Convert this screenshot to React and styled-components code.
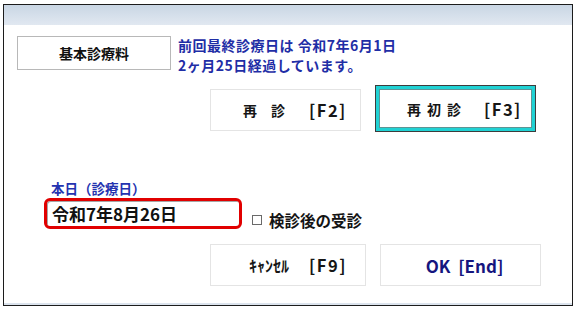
import React from "react";
import styled, { createGlobalStyle } from "styled-components";

const GlobalStyle = createGlobalStyle`
  body {
    margin: 0;
    background: #ffffff;
    font-family: "Noto Sans CJK JP", "Noto Sans", sans-serif;
  }
`;

const App = () => {
  return (
    <>
      <GlobalStyle />
      <Window>
        <TitleBar />
        <Content>
          <TopRow>
            <FeeBox>基本診療料</FeeBox>
            <Info>
              前回最終診療日は 令和7年6月1日
              <br />
              2ヶ月25日経過しています。
            </Info>
          </TopRow>

          <ButtonRow>
            <VisitButton $offset={4}>
              <Chars $spacing={14}>再診</Chars>
              <Key>[F2]</Key>
            </VisitButton>
            <FocusButton>
              <Chars $spacing={6}>再初診</Chars>
              <Key>[F3]</Key>
            </FocusButton>
          </ButtonRow>

          <DateLabel>本日（診療日）</DateLabel>
          <DateRow>
            <DateField>令和7年8月26日</DateField>
            <CheckLabel>
              <CheckBox />
              検診後の受診
            </CheckLabel>
          </DateRow>

          <FooterRow>
            <CancelButton>
              <HalfKana>ｷｬﾝｾﾙ</HalfKana>
              <Key>[F9]</Key>
            </CancelButton>
            <OkButton>OK&nbsp;&nbsp;[End]</OkButton>
          </FooterRow>
        </Content>
        <BottomStrip />
      </Window>
    </>
  );
};

export default App;

const Window = styled.div`
  margin: 4px 0 0 3px;
  width: 568px;
  height: 300px;
  border: 1px solid #1c1c1c;
  background: #ffffff;
  display: flex;
  flex-direction: column;
`;

const TitleBar = styled.div`
  height: 20px;
  flex-shrink: 0;
  background: linear-gradient(to bottom, #c9d6e4, #e1e8f1);
`;

const Content = styled.div`
  flex: 1;
  padding: 11px 0 0 13px;
  display: flex;
  flex-direction: column;
  align-items: flex-start;
`;

const BottomStrip = styled.div`
  height: 2px;
  background: #dbe3ed;
`;

const TopRow = styled.div`
  display: flex;
  align-items: flex-start;
`;

const FeeBox = styled.div`
  width: 154px;
  height: 34px;
  box-sizing: border-box;
  border: 1px solid #b8b8b8;
  display: flex;
  align-items: center;
  justify-content: center;
  font-size: 14px;
  font-weight: 700;
  color: #111;
`;

const Info = styled.div`
  margin-left: 7px;
  font-size: 14px;
  line-height: 19.5px;
  letter-spacing: 0.5px;
  font-weight: 700;
  color: #1f2ea6;
  white-space: nowrap;
`;

const ButtonRow = styled.div`
  margin: 10px 0 0 193px;
  display: flex;
  align-items: flex-start;
  gap: 14px;
`;

const BaseButton = styled.div`
  box-sizing: border-box;
  height: 42px;
  border: 1px solid #e4e4e4;
  background: #ffffff;
  display: flex;
  align-items: center;
  font-size: 14px;
  font-weight: 700;
  color: #161616;
  white-space: nowrap;
`;

const VisitButton = styled(BaseButton)`
  width: 151px;
  margin-top: ${(p) => p.$offset || 0}px;
  padding-left: 32px;
  gap: 10px;
`;

const FocusButton = styled(BaseButton)`
  width: 161px;
  height: 47px;
  border: 1px solid #3c3c3c;
  box-shadow: inset 0 0 0 3px #20d2d4, inset 0 0 0 4px #5e9494;
  padding-left: 31px;
  gap: 17px;
`;

const Chars = styled.span`
  letter-spacing: ${(p) => p.$spacing}px;
`;

const Key = styled.span`
  font-size: 16.5px;
  letter-spacing: 1.5px;
`;

const DateLabel = styled.div`
  margin: 48px 0 0 34px;
  font-size: 13.5px;
  line-height: 16px;
  font-weight: 700;
  color: #2433b0;
`;

const DateRow = styled.div`
  margin: 2px 0 0 27px;
  display: flex;
  align-items: flex-start;
`;

const DateField = styled.div`
  width: 198px;
  height: 31px;
  box-sizing: border-box;
  border: 3px solid #e10000;
  border-radius: 6px;
  box-shadow: inset 1px 1px 0 #a6a6a6;
  padding-left: 5px;
  display: flex;
  align-items: center;
  font-size: 17px;
  font-weight: 700;
  color: #111;
`;

const CheckLabel = styled.div`
  margin: 13px 0 0 10px;
  line-height: 18px;
  display: flex;
  align-items: center;
  gap: 7px;
  font-size: 15.5px;
  font-weight: 700;
  color: #141414;
`;

const CheckBox = styled.span`
  width: 8px;
  height: 8px;
  border: 1px solid #6a6a6a;
`;

const FooterRow = styled.div`
  margin: 15px 0 0 193px;
  display: flex;
  gap: 14px;
`;

const CancelButton = styled(BaseButton)`
  width: 156px;
  padding-left: 38px;
  gap: 20px;
`;

const HalfKana = styled.span`
  font-size: 16px;
`;

const OkButton = styled(BaseButton)`
  width: 161px;
  justify-content: center;
  padding-left: 8px;
  font-size: 17px;
  color: #15157e;
`;
